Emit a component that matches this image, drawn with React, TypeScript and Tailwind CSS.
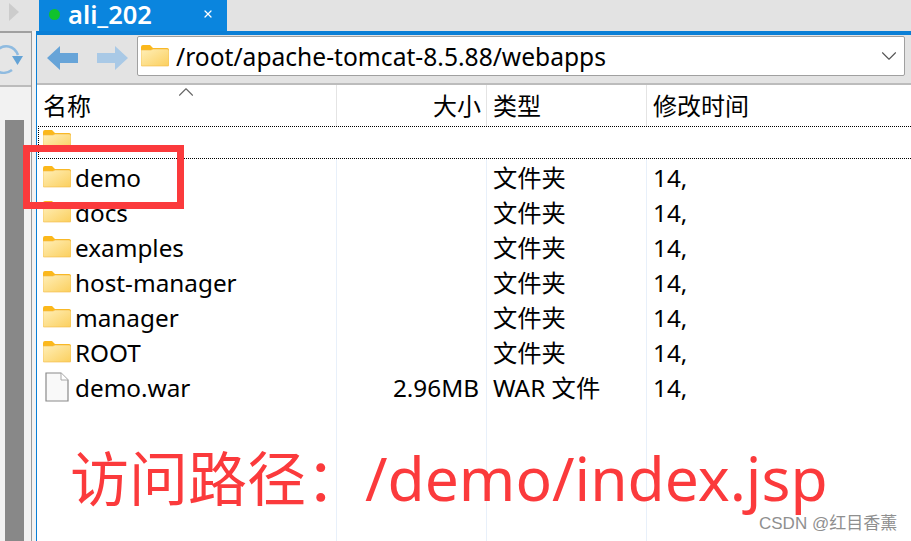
import { ChevronDown, ChevronUp, X } from "lucide-react";

const rows = [
  { name: "demo", size: "", type: "文件夹", date: "14," },
  { name: "docs", size: "", type: "文件夹", date: "14," },
  { name: "examples", size: "", type: "文件夹", date: "14," },
  { name: "host-manager", size: "", type: "文件夹", date: "14," },
  { name: "manager", size: "", type: "文件夹", date: "14," },
  { name: "ROOT", size: "", type: "文件夹", date: "14," },
  { name: "demo.war", size: "2.96MB", type: "WAR 文件", date: "14,", file: true },
];

function FolderIcon({ className }: { className?: string }) {
  return (
    <svg viewBox="0 0 28 22" className={className}>
      <defs>
        <linearGradient id="folderFill" x1="0" y1="0" x2="1" y2="1">
          <stop offset="0" stopColor="#ffefb8" />
          <stop offset="1" stopColor="#fbcf5e" />
        </linearGradient>
      </defs>
      <path d="M0 2a2 2 0 0 1 2-2h7l3 3h14a2 2 0 0 1 2 2v3H0z" fill="#fbb81c" />
      <path d="M0 5h10l2-1h14a2 2 0 0 1 2 2v14a1 1 0 0 1-1 1H1a1 1 0 0 1-1-1z" fill="url(#folderFill)" stroke="#f3bb45" strokeWidth="0.6" />
    </svg>
  );
}

function FileIcon() {
  return (
    <svg viewBox="0 0 24 30" className="h-[30px] w-6">
      <path d="M1 1h15l7 7v21H1z" fill="#f9f9f9" stroke="#8a8a8a" strokeWidth="1.2" />
      <path d="M16 1v7h7" fill="#fff" stroke="#a8a8a8" strokeWidth="1" />
    </svg>
  );
}

function ArrowIcon({ flip, color }: { flip?: boolean; color: string }) {
  return (
    <svg viewBox="0 0 31 24" className={flip ? "h-6 w-[31px] rotate-180" : "h-6 w-[31px]"}>
      <path d="M0 12 13 0v7h18v10H13v7z" fill={color} />
    </svg>
  );
}

export default function App() {
  return (
    <div
      className="relative flex h-[541px] w-[911px] flex-col overflow-hidden bg-white text-black"
      style={{ fontFamily: '"Noto Sans", "Noto Sans CJK SC", sans-serif' }}
    >
      {/* tab strip */}
      <div className="flex h-[31px] shrink-0 bg-[#e3e3e3]">
        <div className="flex w-[39px] items-start pl-[9px] pt-[3px]">
          <div className="h-0 w-0 border-y-[9px] border-l-[10px] border-y-transparent border-l-[#cccccc]" />
        </div>
        <div className="flex w-[188px] items-center bg-[#0a85de] pb-[3px] pl-[10px] text-white">
          <span className="h-[11px] w-[11px] rounded-full bg-[#10c22d]" />
          <span className="ml-[8px] text-[25.500px] font-semibold leading-[26px]">ali_202</span>
          <X className="ml-auto mr-[13px] h-3 w-3" strokeWidth={2.5} />
        </div>
      </div>

      <div className="flex min-h-0 flex-1">
        {/* left pane */}
        <div className="flex w-[36px] shrink-0">
          <div className="flex w-[31px] flex-col border-t-[2px] border-[#a0a0a0] bg-[#e6e6e6]">
            <div className="flex h-[54px] items-center border-b-[2px] border-[#bcbcbc]">
              <svg viewBox="0 0 26 32" className="h-8 w-[26px]">
                <path d="M-3 7C4 1 14 2 18 12" fill="none" stroke="#8fbbe0" strokeWidth="2.6" />
                <path d="M-3 28c5 3 11 2 15-1" fill="none" stroke="#8fbbe0" strokeWidth="2.6" />
                <path d="M12 13h11l-5.500 9z" fill="#64a3d6" />
              </svg>
            </div>
            <div className="flex-1 bg-[#f2f2f2] pl-[5px] pt-[33px]">
              <div className="h-full w-[19px] bg-[#888888]" />
            </div>
          </div>
          <div className="w-[5px] border-l-[1px] border-[#9a9a9a] bg-[#f2f2f2]" />
        </div>

        {/* file pane */}
        <div className="flex min-w-0 flex-1 flex-col border-l-[1px] border-t-[4px] border-[#0a7fd6]">
          <div className="flex h-[50px] shrink-0 items-start border-b-[2px] border-[#bcbcbc] bg-[#e3e3e3]">
            <div className="ml-[10px] mt-[11px] flex w-[90px] gap-[19px]">
              <ArrowIcon color="#67a4d8" />
              <ArrowIcon flip color="#a9c9e6" />
            </div>
            <div className="mt-[1px] flex h-10 w-[768px] items-center rounded-[2px] border border-[#a0a0a0] bg-white pl-[3px]">
              <FolderIcon className="h-[22px] w-[28px]" />
              <span className="ml-[7px] pt-[2px] text-[24.600px] leading-none">/root/apache-tomcat-8.5.88/webapps</span>
              <ChevronDown className="ml-auto mr-[2px] h-[26px] w-[26px] text-[#555555]" strokeWidth={1} />
            </div>
          </div>

          {/* column header */}
          <div className="relative flex h-[41px] shrink-0 text-[24px] leading-none">
            <ChevronUp className="absolute left-[136px] top-[-6px] h-[26px] w-[26px] text-[#666666]" strokeWidth={1} />
            <div className="flex w-[300px] items-center border-r border-[#e4e4e4] pl-[6px]">名称</div>
            <div className="flex w-[150px] items-center justify-end border-r border-[#e4e4e4] pr-[5px]">大小</div>
            <div className="flex w-[160px] items-center border-r border-[#e4e4e4] pl-[6px]">类型</div>
            <div className="flex flex-1 items-center pl-[6px]">修改时间</div>
          </div>

          {/* parent dir row */}
          <div className="ml-[1px] flex h-[33px] shrink-0 border-y border-l border-dotted border-black pl-[4px] pt-[3px]">
            <FolderIcon className="h-[22px] w-[28px]" />
          </div>

          {rows.map((row) => (
            <div key={row.name} className="flex h-[35px] shrink-0 items-center text-[24.300px] leading-none">
              <div className="flex h-full w-[300px] items-center border-r border-[#e8f0fa] pl-[6px]">
                <div className="flex w-[28px] justify-center">
                  {row.file ? <FileIcon /> : <FolderIcon className="h-[22px] w-[28px]" />}
                </div>
                <span className="ml-[4px] pt-[4px]">{row.name}</span>
              </div>
              <div className="flex h-full w-[150px] items-center justify-end border-r border-[#e8f0fa] pr-[7px] pt-[4px]">
                {row.size}
              </div>
              <div className="flex h-full w-[160px] items-center border-r border-[#e8f0fa] pl-[6px] pt-[4px]">{row.type}</div>
              <div className="flex h-full flex-1 items-center pl-[6px] pt-[4px]">{row.date}</div>
            </div>
          ))}

          {/* empty space below the list, column lines keep running */}
          <div className="flex min-h-0 flex-1">
            <div className="w-[300px] border-r border-[#e8f0fa]" />
            <div className="w-[150px] border-r border-[#e8f0fa]" />
            <div className="w-[160px] border-r border-[#e8f0fa]" />
          </div>
        </div>
      </div>

      {/* annotations on top of the screenshot */}
      <div className="absolute left-[23px] top-[145px] h-[64px] w-[161px] border-[7px] border-[#fb3a3c]" />
      <div className="absolute left-[70px] top-[444px] whitespace-nowrap text-[60.500px] leading-[68px] text-[#fb3a3c]">
        <span className="text-[59px]">访问路径：</span>/demo/index.jsp
      </div>
      <div
        className="absolute left-[759px] top-[514px] whitespace-nowrap text-[17px] leading-[20px] text-[#8f8f8f]"
        style={{ fontFamily: '"Liberation Sans", "Noto Sans CJK SC", sans-serif' }}
      >
        CSDN @红目香薰
      </div>
    </div>
  );
}
